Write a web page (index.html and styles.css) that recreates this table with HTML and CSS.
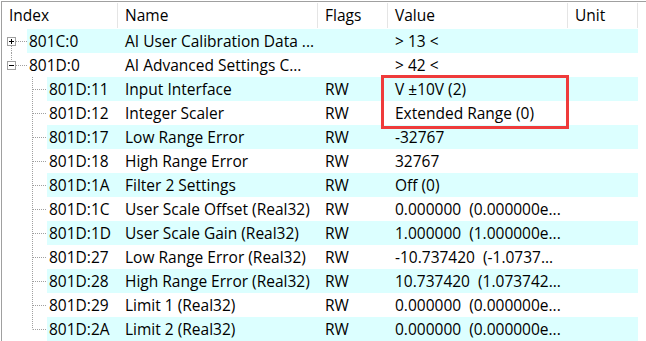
FILE: index.html
```html
<!DOCTYPE html>
<html lang="en">
<head>
<meta charset="utf-8">
<title>Object Dictionary</title>
<link rel="stylesheet" href="styles.css">
</head>
<body>
<div class="list">
  <div class="header">
    <div class="hcell c-index">Index</div>
    <div class="hcell c-name">Name</div>
    <div class="hcell c-flags">Flags</div>
    <div class="hcell c-value">Value</div>
    <div class="hcell c-unit">Unit</div>
  </div>

  <div class="row root">
    <svg class="gutter g-root" width="25" height="24" viewBox="0 0 25 24">
      <path class="dots" d="M9.5 17V24M14 12.5H25"/>
      <rect class="box" x="5.5" y="8.5" width="8" height="8"/>
      <path class="sign" d="M7 12.5H12M9.5 10V15"/>
    </svg>
    <div class="band alt">
      <div class="cell c-id">801C:0</div>
      <div class="cell c-name">AI User Calibration Data ...</div>
      <div class="cell c-flags"></div>
      <div class="cell c-value">&gt; 13 &lt;</div>
      <div class="cell c-unit"></div>
    </div>
  </div>

  <div class="row root">
    <svg class="gutter g-root" width="25" height="24" viewBox="0 0 25 24">
      <path class="dots" d="M9.5 0V8M14 12.5H25"/>
      <rect class="box" x="5.5" y="8.5" width="8" height="8"/>
      <path class="sign" d="M7 12.5H12"/>
    </svg>
    <div class="band">
      <div class="cell c-id">801D:0</div>
      <div class="cell c-name">AI Advanced Settings C...</div>
      <div class="cell c-flags"></div>
      <div class="cell c-value">&gt; 42 &lt;</div>
      <div class="cell c-unit"></div>
    </div>
  </div>

  <div class="row child">
    <svg class="gutter g-child" width="45" height="24" viewBox="0 0 45 24"><path class="dots" d="M30.5 0V24M31 12.5H45"/></svg>
    <div class="band alt">
      <div class="cell c-id">801D:11</div>
      <div class="cell c-name">Input Interface</div>
      <div class="cell c-flags">RW</div>
      <div class="cell c-value">V ±10V (2)</div>
      <div class="cell c-unit"></div>
    </div>
  </div>

  <div class="row child">
    <svg class="gutter g-child" width="45" height="24" viewBox="0 0 45 24"><path class="dots" d="M30.5 0V24M31 12.5H45"/></svg>
    <div class="band">
      <div class="cell c-id">801D:12</div>
      <div class="cell c-name">Integer Scaler</div>
      <div class="cell c-flags">RW</div>
      <div class="cell c-value">Extended Range (0)</div>
      <div class="cell c-unit"></div>
    </div>
  </div>

  <div class="row child">
    <svg class="gutter g-child" width="45" height="24" viewBox="0 0 45 24"><path class="dots" d="M30.5 0V24M31 12.5H45"/></svg>
    <div class="band alt">
      <div class="cell c-id">801D:17</div>
      <div class="cell c-name">Low Range Error</div>
      <div class="cell c-flags">RW</div>
      <div class="cell c-value">-32767</div>
      <div class="cell c-unit"></div>
    </div>
  </div>

  <div class="row child">
    <svg class="gutter g-child" width="45" height="24" viewBox="0 0 45 24"><path class="dots" d="M30.5 0V24M31 12.5H45"/></svg>
    <div class="band">
      <div class="cell c-id">801D:18</div>
      <div class="cell c-name">High Range Error</div>
      <div class="cell c-flags">RW</div>
      <div class="cell c-value">32767</div>
      <div class="cell c-unit"></div>
    </div>
  </div>

  <div class="row child">
    <svg class="gutter g-child" width="45" height="24" viewBox="0 0 45 24"><path class="dots" d="M30.5 0V24M31 12.5H45"/></svg>
    <div class="band alt">
      <div class="cell c-id">801D:1A</div>
      <div class="cell c-name">Filter 2 Settings</div>
      <div class="cell c-flags">RW</div>
      <div class="cell c-value">Off (0)</div>
      <div class="cell c-unit"></div>
    </div>
  </div>

  <div class="row child">
    <svg class="gutter g-child" width="45" height="24" viewBox="0 0 45 24"><path class="dots" d="M30.5 0V24M31 12.5H45"/></svg>
    <div class="band">
      <div class="cell c-id">801D:1C</div>
      <div class="cell c-name">User Scale Offset (Real32)</div>
      <div class="cell c-flags">RW</div>
      <div class="cell c-value">0.000000  (0.000000e...</div>
      <div class="cell c-unit"></div>
    </div>
  </div>

  <div class="row child">
    <svg class="gutter g-child" width="45" height="24" viewBox="0 0 45 24"><path class="dots" d="M30.5 0V24M31 12.5H45"/></svg>
    <div class="band alt">
      <div class="cell c-id">801D:1D</div>
      <div class="cell c-name">User Scale Gain (Real32)</div>
      <div class="cell c-flags">RW</div>
      <div class="cell c-value">1.000000  (1.000000e...</div>
      <div class="cell c-unit"></div>
    </div>
  </div>

  <div class="row child">
    <svg class="gutter g-child" width="45" height="24" viewBox="0 0 45 24"><path class="dots" d="M30.5 0V24M31 12.5H45"/></svg>
    <div class="band">
      <div class="cell c-id">801D:27</div>
      <div class="cell c-name">Low Range Error (Real32)</div>
      <div class="cell c-flags">RW</div>
      <div class="cell c-value">-10.737420  (-1.0737...</div>
      <div class="cell c-unit"></div>
    </div>
  </div>

  <div class="row child">
    <svg class="gutter g-child" width="45" height="24" viewBox="0 0 45 24"><path class="dots" d="M30.5 0V24M31 12.5H45"/></svg>
    <div class="band alt">
      <div class="cell c-id">801D:28</div>
      <div class="cell c-name">High Range Error (Real32)</div>
      <div class="cell c-flags">RW</div>
      <div class="cell c-value">10.737420  (1.073742...</div>
      <div class="cell c-unit"></div>
    </div>
  </div>

  <div class="row child">
    <svg class="gutter g-child" width="45" height="24" viewBox="0 0 45 24"><path class="dots" d="M30.5 0V24M31 12.5H45"/></svg>
    <div class="band">
      <div class="cell c-id">801D:29</div>
      <div class="cell c-name">Limit 1 (Real32)</div>
      <div class="cell c-flags">RW</div>
      <div class="cell c-value">0.000000  (0.000000e...</div>
      <div class="cell c-unit"></div>
    </div>
  </div>

  <div class="row child">
    <svg class="gutter g-child" width="45" height="24" viewBox="0 0 45 24"><path class="dots" d="M30.5 0V12.5M31 12.5H45"/></svg>
    <div class="band alt">
      <div class="cell c-id">801D:2A</div>
      <div class="cell c-name">Limit 2 (Real32)</div>
      <div class="cell c-flags">RW</div>
      <div class="cell c-value">0.000000  (0.000000e...</div>
      <div class="cell c-unit"></div>
    </div>
  </div>

  <div class="highlight"></div>
</div>
</body>
</html>
```

FILE: styles.css
```css
html, body {
  margin: 0;
  padding: 0;
  background: #fff;
}

body {
  font-family: "Open Sans", "Noto Sans", "Noto Sans CJK SC", sans-serif;
  font-size: 15.5px;
  color: #000;
  overflow: hidden;
}

/* list control frame */
.list {
  position: relative;
  margin: 1px 0 0 1px;
  border-top: 1px solid #a0a0a0;
  border-left: 1px solid #a0a0a0;
  height: 340px;
}

/* column header */
.header {
  display: flex;
  height: 27px;
  line-height: 27px;
}

.hcell {
  flex: none;
  padding-left: 7px;
  box-sizing: border-box;
  white-space: nowrap;
  background-image: linear-gradient(#e5e5e5, #e5e5e5);
  background-repeat: no-repeat;
  background-size: 1px 25px;
  background-position: right center;
}

.header .c-index { width: 116px; }
.header .c-name  { width: 200px; }
.header .c-flags { width: 70px; }
.header .c-value { width: 180px; }
.header .c-unit  { width: 70px; }

/* tree rows */
.row {
  display: flex;
  height: 24px;
  line-height: 24px;
}

.gutter {
  flex: none;
  display: block;
}

.dots {
  fill: none;
  stroke: #a0a0a0;
  stroke-width: 1;
  stroke-dasharray: 1 1;
}

.box {
  fill: #fff;
  stroke: #a0a0a0;
  stroke-width: 1;
}

.sign {
  fill: none;
  stroke: #000;
  stroke-width: 1;
}

.band {
  display: flex;
  flex: none;
}

.band.alt {
  background: #dcffff;
}

.cell {
  flex: none;
  box-sizing: border-box;
  padding-left: 7px;
  white-space: pre;
  overflow: hidden;
}

.root .c-id  { width: 91px; padding-left: 2px; }
.child .c-id { width: 71px; padding-left: 2px; }
.band .c-name  { width: 200px; }
.band .c-flags { width: 70px; }
.band .c-value { width: 180px; }
.band .c-unit  { width: 70px; }

/* red annotation frame around the two interface values */
.highlight {
  position: absolute;
  left: 379px;
  top: 73px;
  width: 188px;
  height: 54px;
  box-sizing: border-box;
  border: 3px solid #ef3b3b;
}
```
